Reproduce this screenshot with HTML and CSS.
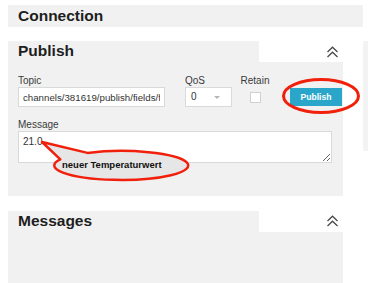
FILE: index.html
```html
<!DOCTYPE html>
<html lang="en">
<head>
    <meta charset="UTF-8">
    <meta name="viewport" content="width=device-width, initial-scale=1.0">
    <title>MQTT Client</title>
    <link rel="stylesheet" href="styles.css">
</head>
<body>
    <div class="page">
        <div class="bar">
            <h2>Connection</h2>
        </div>
        <div class="columns">
            <div class="main">
                <section class="panel">
                    <div class="panel-head">
                        <h2 class="panel-title">Publish</h2>
                        <div class="panel-tools">
                            <svg class="chevron" width="13" height="12" viewBox="0 0 13 12">
                                <polyline points="1.5,6 6.5,1.2 11.5,6" />
                                <polyline points="1.5,11 6.5,6.2 11.5,11" />
                            </svg>
                        </div>
                    </div>
                    <div class="panel-body">
                        <div class="row">
                            <div class="field topic">
                                <span class="label">Topic</span>
                                <input class="input" type="text" value="channels/381619/publish/fields/field1">
                            </div>
                            <div class="field qos">
                                <span class="label">QoS</span>
                                <div class="select">0<i class="caret"></i></div>
                            </div>
                            <div class="field retain">
                                <span class="label">Retain</span>
                                <span class="check"></span>
                            </div>
                            <button class="btn">Publish</button>
                        </div>
                        <div class="field message">
                            <span class="label">Message</span>
                            <textarea class="textarea">21.0</textarea>
                        </div>
                    </div>
                </section>

                <section class="panel messages">
                    <div class="panel-head">
                        <h2 class="panel-title">Messages</h2>
                        <div class="panel-tools">
                            <svg class="chevron" width="13" height="12" viewBox="0 0 13 12">
                                <polyline points="1.5,6 6.5,1.2 11.5,6" />
                                <polyline points="1.5,11 6.5,6.2 11.5,11" />
                            </svg>
                        </div>
                    </div>
                    <div class="panel-body empty"></div>
                </section>
            </div>
            <div class="side"></div>
        </div>
    </div>

    <!-- annotations drawn over the screenshot -->
    <svg class="ring" width="82" height="40" viewBox="0 0 82 40">
        <ellipse cx="41" cy="20" rx="37.5" ry="16.5" />
    </svg>

    <svg class="callout" width="160" height="50" viewBox="0 0 160 50">
        <path d="M24.3 23.4 L6 6 L51.5 16.9 A67 14.5 0 1 1 24.3 23.4 Z" />
        <text x="26" y="31.5">neuer Temperaturwert</text>
    </svg>
</body>
</html>
```

FILE: styles.css
```css
html, body {
    overflow: hidden;
}

body {
    margin: 0;
    position: relative;
    font-family: "Liberation Sans", Arial, sans-serif;
    color: #333;
    background: #fff;
}

.page {
    padding: 5px 0 0 8px;
}

h2 {
    margin: 0;
    font-size: 15.5px;
    font-weight: bold;
    color: #1e1e1e;
}

.bar {
    width: 355px;
    height: 22px;
    background: #f1f1f1;
    padding-left: 10px;
    box-sizing: border-box;
    margin-bottom: 14px;
}

.bar h2 {
    line-height: 22px;
}

.columns {
    display: flex;
    gap: 20px;
    align-items: flex-start;
}

.main {
    width: 335px;
    flex-shrink: 0;
}

.side {
    width: 5px;
    height: 110px;
    flex-shrink: 0;
    background: #f3f3f3;
}

/* panels */
.panel-head {
    display: flex;
    height: 21px;
}

.panel-title {
    width: 251px;
    background: #f1f1f1;
    padding-left: 10px;
    box-sizing: border-box;
    line-height: 20px;
}

.panel-tools {
    flex: 1;
    display: flex;
    justify-content: flex-end;
    align-items: center;
    padding-right: 4px;
    background: #fff;
}

.chevron polyline {
    fill: none;
    stroke: #4a4a4a;
    stroke-width: 1.3;
}

.panel-body {
    background: #f1f1f1;
    padding: 13px 0 33px 10px;
}

.messages {
    margin-top: 15px;
}

.messages .panel-tools {
    align-items: flex-start;
    padding-top: 4px;
}

.panel-body.empty {
    height: 51px;
    padding: 0;
}

/* form */
.row {
    display: flex;
    align-items: flex-end;
}

.field {
    display: flex;
    flex-direction: column;
}

.label {
    font-size: 10px;
    line-height: 12px;
    color: #3a3a3a;
}

.input,
.select,
.textarea {
    font-family: "Liberation Sans", Arial, sans-serif;
    font-size: 9.7px;
    color: #333;
    background: #fff;
    border: 1px solid #d9d9d9;
    box-sizing: border-box;
    margin: 0;
    outline: none;
}

.topic {
    width: 147px;
    margin-right: 20px;
}

.input {
    height: 20px;
    width: 147px;
    padding: 0 4px;
}

.qos {
    width: 47px;
    margin-right: 9px;
}

.select {
    position: relative;
    height: 20px;
    line-height: 18px;
    padding-left: 5px;
    font-size: 10px;
}

.caret {
    position: absolute;
    right: 11px;
    top: 8px;
    border-left: 3px solid transparent;
    border-right: 3px solid transparent;
    border-top: 3px solid #b5b5b5;
}

.retain {
    width: 28px;
    align-items: center;
}

.check {
    width: 11px;
    height: 11px;
    background: #fff;
    border: 1px solid #d0d0d0;
    box-sizing: border-box;
    margin: 5px 0 4px;
}

.btn {
    margin: 0 1px 1px auto;
    width: 52px;
    height: 18px;
    padding: 0;
    border: none;
    background: #2ba6cb;
    color: #fff;
    font-family: "Liberation Sans", Arial, sans-serif;
    font-weight: bold;
    font-size: 8.6px;
}

.message {
    margin-top: 12px;
}

.textarea {
    display: block;
    width: 314px;
    height: 32px;
    padding: 4px 4px;
    font-size: 10px;
    resize: vertical;
}

/* annotations */
.ring {
    position: absolute;
    left: 280px;
    top: 76px;
    overflow: visible;
}

.ring ellipse {
    fill: none;
    stroke: #f1200c;
    stroke-width: 3;
}

.callout {
    position: absolute;
    left: 36px;
    top: 136px;
    overflow: visible;
}

.callout path {
    fill: #e6e6e6;
    stroke: #f1200c;
    stroke-width: 2.5;
    stroke-linejoin: round;
}

.callout text {
    font-family: "Liberation Sans", Arial, sans-serif;
    font-weight: bold;
    font-size: 9.5px;
    fill: #111;
}
```
